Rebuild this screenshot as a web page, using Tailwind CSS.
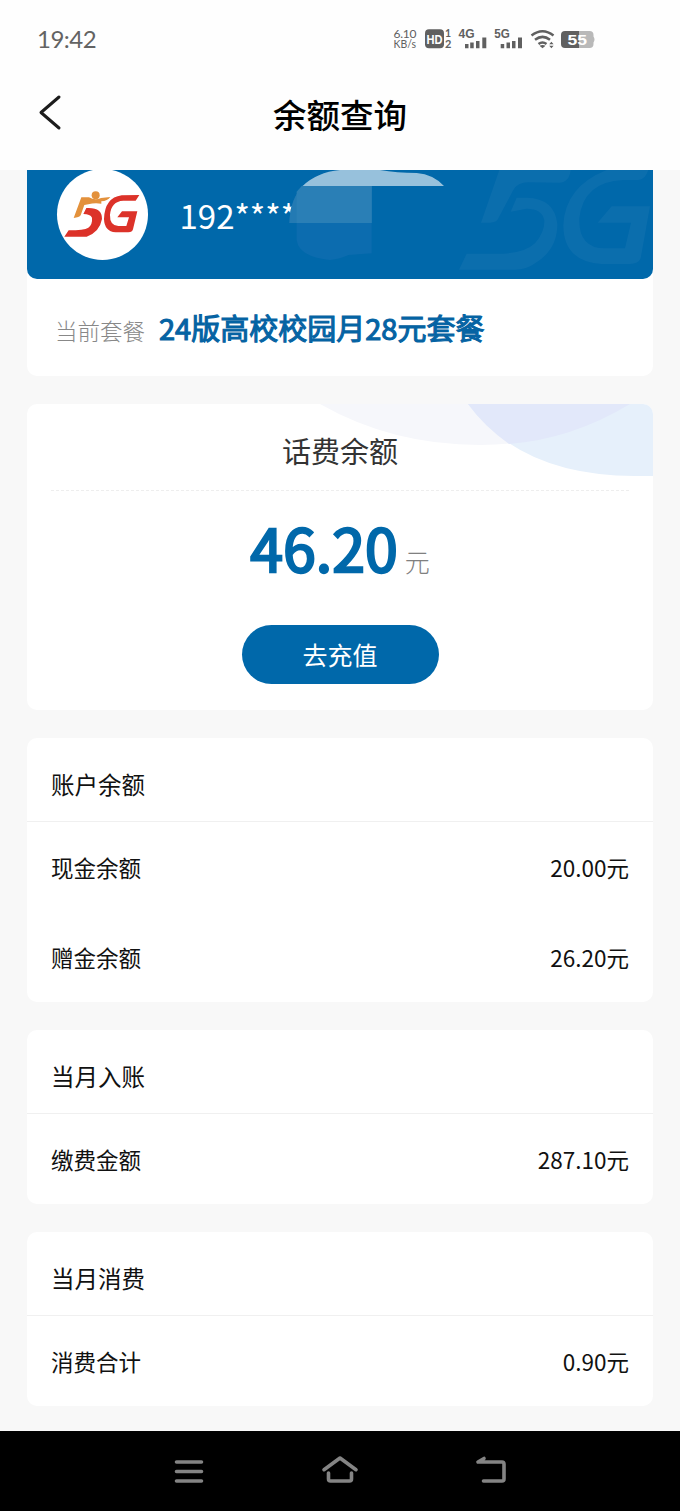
<!DOCTYPE html>
<html lang="zh-CN">
<head>
<meta charset="utf-8">
<meta name="viewport" content="width=device-width, initial-scale=1">
<title>余额查询</title>
<script src="https://cdn.jsdelivr.net/npm/@tailwindcss/browser@4"></script>
</head>
<body class="bg-[#f8f8f8] font-['Noto_Sans_CJK_SC',sans-serif] text-[#111]">
<div class="flex h-[1511px] w-[680px] flex-col overflow-hidden">

  <!-- Status bar -->
  <header class="h-[170px] shrink-0 bg-[#fefefe]">
    <div class="flex h-[78px] items-center justify-between pl-[37px] pr-[84px] text-[#636363]">
      <span class="font-['Lato',sans-serif] text-[24px] leading-none tracking-[-0.500px]">19:42</span>
      <svg class="h-[40px] w-[204px]" viewBox="0 0 204 40" fill="#606060" font-family="Lato, sans-serif">
        <text x="1.500" y="19" font-size="12" textLength="23">6.10</text>
        <text x="1.500" y="29" font-size="10.500" textLength="22.500" lengthAdjust="spacingAndGlyphs">KB/s</text>
        <rect x="33" y="10.300" width="19" height="19" rx="4"/>
        <text x="34.500" y="24.500" font-size="12" font-weight="700" fill="#fff" textLength="16" lengthAdjust="spacingAndGlyphs" font-family="Liberation Sans">HD</text>
        <text x="53" y="17.800" font-size="10.500" font-weight="700">1</text>
        <text x="53" y="29.300" font-size="11" font-weight="700">2</text>
        <text x="66.500" y="19.200" font-size="12.500" font-weight="700" textLength="16" lengthAdjust="spacingAndGlyphs" font-family="Liberation Sans">4G</text>
        <path d="M73 25h3.500v4.300h-3.500zM78.200 23.500h3.500v5.800h-3.500zM84 22h3.500v7.300h-3.500zM90.300 18.500h4v10.800h-4z"/>
        <text x="102.300" y="19.200" font-size="12.500" font-weight="700" textLength="15.500" lengthAdjust="spacingAndGlyphs" font-family="Liberation Sans">5G</text>
        <path d="M108.700 25h3.500v4.300h-3.500zM114.500 23.500h3.500v5.800h-3.500zM120 22h3.500v7.300h-3.500zM126 18.500h4v10.800h-4z"/>
        <path d="M139.500 16.500q11-8.500 22 0M143 20.800q7.500-5.800 15 0M146.500 25q4-3 8 0" fill="none" stroke="#606060" stroke-width="2.500"/>
        <path d="M147.500 26.800q3-1.500 6 0l-3 2.500zM157.200 25.300l2.200-2.500 2.200 2.500zM157.200 26.800l2.200 2.500 2.200-2.500z"/>
        <path d="M176 12h21.500q4 0 4 4v1.500q2 3 0 6V25q0 4-4 4H176z" fill="#b9b9b9"/>
        <path d="M187 12v17h-14q-4 0-4-4v-9q0-4 4-4z"/>
        <text x="175.500" y="26.200" font-size="15.500" font-weight="700" fill="#fff" textLength="19.500" lengthAdjust="spacingAndGlyphs" font-family="Liberation Sans">55</text>
      </svg>
    </div>
    <div class="grid h-[74px] grid-cols-[1fr_auto_1fr] items-center px-[36px]">
      <svg class="-mt-[6px] h-[40px] w-[28px]" viewBox="0 0 28 40" fill="none" stroke="#1c1c1c" stroke-width="3" stroke-linecap="round" stroke-linejoin="round"><path d="M23 5 5 20.500 23 36"/></svg>
      <h1 class="-mt-[2px] text-[33.500px] leading-none font-medium text-black">余额查询</h1>
    </div>
  </header>

  <main class="flex grow flex-col gap-[28px] px-[27px]">
    <!-- Account and current plan -->
    <section class="h-[206px] shrink-0 overflow-hidden rounded-b-[10px] bg-white">
      <div class="relative h-[109px] overflow-hidden rounded-b-[10px] bg-[#0068aa]">
        <svg class="h-[109px] w-[626px]" viewBox="0 0 626 109">
          <g transform="translate(253 -5) scale(.33333)" fill="#fff" fill-opacity=".045">
            <path d="M658 15H872Q868 52 838 53L745 52Q712 53 700 75L655 160Q650 173 630 173H603Z"/>
            <path d="M710 98H740Q825 100 832 178Q832 255 765 295Q740 314 705 314H537L560 266H670Q735 263 765 235Q795 200 793 165Q785 131 740 131L692 140Z"/>
            <path d="M980 15H1105Q1095 45 1075 45H1030Q910 50 898 160Q895 250 975 250H1035L1053 173H953L995 124H1110L1082 280Q1075 297 1050 297H965Q850 290 850 180Q855 65 980 15Z"/>
          </g>
          <circle cx="75.500" cy="44.500" r="45.500" fill="#fff"/>
          <g transform="translate(-7 -5) scale(.33333)">
            <g fill="#e3913c">
              <circle cx="227" cy="91" r="12"/>
              <path d="M184 97H207Q225 107 243 99L271 96Q263 108 244 109V116Q224 112 205 118L193 120L182 151Q178 158 161 159Z"/>
            </g>
            <g fill="#dc3229">
              <path d="M199 129Q247 126 246 162Q239 201 200 215H133L146 196Q192 196 205 188Q218 178 216 158Q211 147 190 147Z"/>
              <path d="M358 90L347 107H310Q273 109 270 150Q269 182 295 183H319L327 157H292L306 139H352L339 193Q337 202 325 202H287Q253 199 252 162Q254 98 305 91Z"/>
            </g>
          </g>
          <text x="152.500" y="58.500" font-size="33" fill="#fff" font-family="Noto Sans CJK SC">192****</text>
          <g transform="translate(253 -5) scale(.33333)">
            <path d="M70 62Q30 100 28 174H50V225Q55 275 150 285Q180 282 205 270L275 265V62Z" fill="#0c6caf"/>
            <path d="M70 62Q30 100 28 174H275V62Z" fill="#237ab3"/>
            <path d="M50 80V174H275V62H66Z" fill="#2a7fb6"/>
            <path d="M68 63Q110 22 180 15H300Q350 24 410 24Q460 28 492 63Z" fill="#97c1dc"/>
          </g>
        </svg>
      </div>
      <div class="flex h-[97px] items-baseline pl-[28px] pt-[27px]">
        <span class="text-[22.500px] leading-[42px] font-light text-[#888]">当前套餐</span>
        <span class="ml-[14px] text-[29px] leading-[42px] text-[#0563a3] [-webkit-text-stroke:1.100px_#0563a3]">24版高校校园月28元套餐</span>
      </div>
    </section>

    <!-- Balance -->
    <section class="relative flex h-[306px] shrink-0 flex-col items-center overflow-hidden rounded-[10px] bg-white">
      <svg class="absolute top-0 right-0 h-[73px] w-[340px]" viewBox="286 0 340 73">
        <path d="M293 0Q365 41 453 41Q535 41 603 0Z" fill="#f6f7fb"/>
        <path d="M441 0Q494 72 608 72H626V0Z" fill="#e6f0fb"/>
        <path d="M441 0Q457 22 482 40Q545 35 603 0Z" fill="#e2e8fa"/>
      </svg>
      <h2 class="relative flex h-[87px] w-[578px] items-center justify-center border-b border-dashed border-[#eee] pt-[7px] text-[29px] leading-none text-[#333]">话费余额</h2>
      <div class="flex h-[133px] items-baseline pt-[14px]">
        <strong class="text-[59px] leading-[84px] font-normal text-[#0068aa] [-webkit-text-stroke:2.400px_#0068aa]">46.20</strong>
        <span class="ml-[7px] text-[25px] leading-none font-light text-[#808080]">元</span>
      </div>
      <button class="mt-px h-[59px] w-[197px] rounded-full bg-[#0068aa] text-[25px] leading-none text-white">去充值</button>
    </section>

    <section class="shrink-0 overflow-hidden rounded-[10px] bg-white">
      <h3 class="flex h-[84px] items-center border-b border-[#f0f0f0] px-[24px] pt-[10px] text-[23.500px] leading-none">账户余额</h3>
      <div class="flex h-[90px] items-center justify-between px-[24px] text-[22.500px] leading-none"><span>现金余额</span><span>20.00元</span></div>
      <div class="flex h-[90px] items-center justify-between px-[24px] text-[22.500px] leading-none"><span>赠金余额</span><span>26.20元</span></div>
    </section>

    <section class="shrink-0 overflow-hidden rounded-[10px] bg-white">
      <h3 class="flex h-[84px] items-center border-b border-[#f0f0f0] px-[24px] pt-[10px] text-[23.500px] leading-none">当月入账</h3>
      <div class="flex h-[90px] items-center justify-between px-[24px] text-[22.500px] leading-none"><span>缴费金额</span><span>287.10元</span></div>
    </section>

    <section class="shrink-0 overflow-hidden rounded-[10px] bg-white">
      <h3 class="flex h-[84px] items-center border-b border-[#f0f0f0] px-[24px] pt-[10px] text-[23.500px] leading-none">当月消费</h3>
      <div class="flex h-[90px] items-center justify-between px-[24px] text-[22.500px] leading-none"><span>消费合计</span><span>0.90元</span></div>
    </section>
  </main>

  <!-- System navigation -->
  <nav class="h-[80px] shrink-0 bg-black">
    <svg class="h-[80px] w-[680px]" viewBox="0 0 680 80" fill="none" stroke="#848484" stroke-width="3.600" stroke-linecap="round" stroke-linejoin="round">
      <path d="M176.500 31h25M176.500 40.500h25M176.500 50h25"/>
      <path d="M324 38.700 340 27l16 11.700M328.500 42v6q0 2 2 2h19q2 0 2-2v-6"/>
      <path d="M484 27.500 478 31h24q2 0 2 2v15q0 2-2 2h-18.500"/>
    </svg>
  </nav>
</div>
</body>
</html>
